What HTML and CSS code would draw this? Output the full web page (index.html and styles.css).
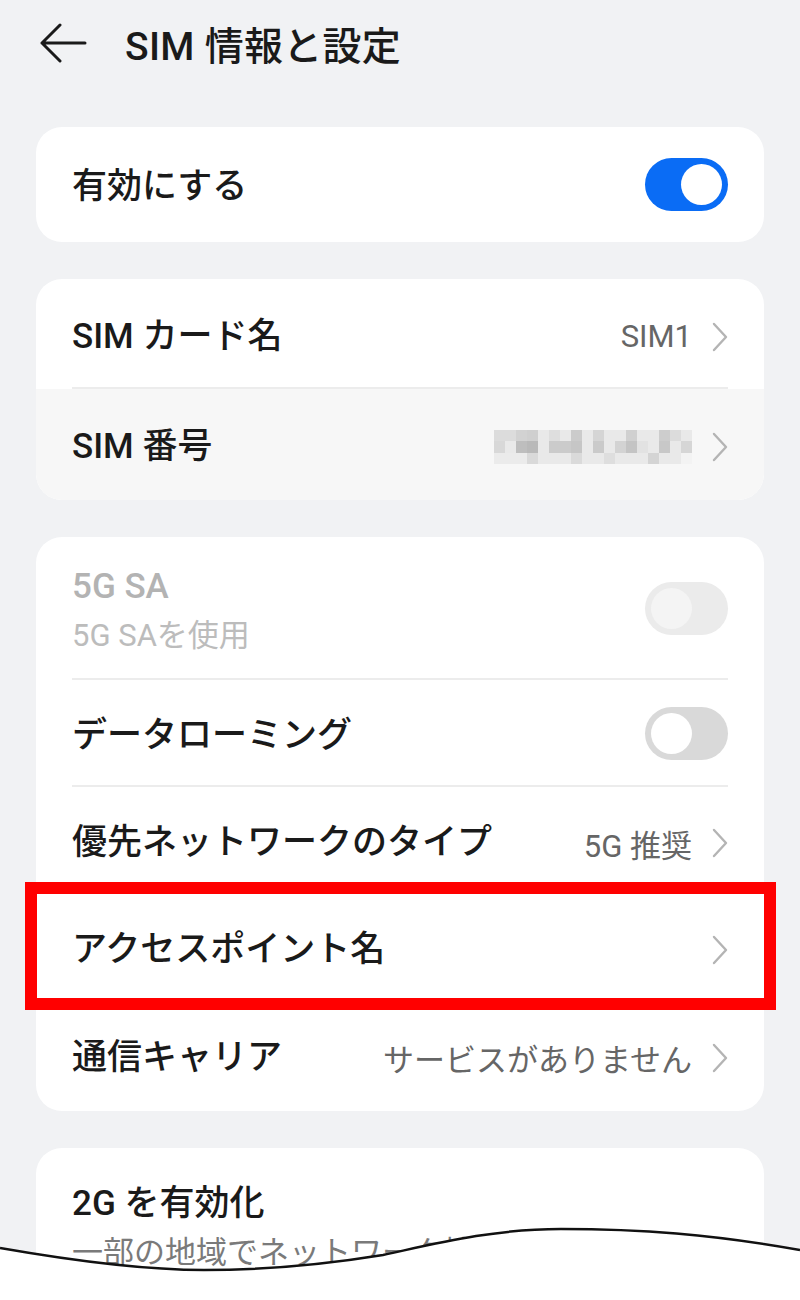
FILE: index.html
```html
<!DOCTYPE html>
<html lang="ja">
<head>
<meta charset="utf-8">
<title>SIM 情報と設定</title>
<link rel="stylesheet" href="styles.css">
</head>
<body>
<div class="screen">
  <header class="topbar">
    <svg class="back" width="48" height="40" viewBox="0 0 48 40"><path d="M3 20 H46 M21 2 L3 20 L21 38" fill="none" stroke="#1a1a1a" stroke-width="3" stroke-linecap="round" stroke-linejoin="round"/></svg>
    <h1 class="title">SIM 情報と設定</h1>
  </header>

  <section class="card">
    <div class="row row-single">
      <span class="label">有効にする</span>
      <span class="switch switch-on"><span class="knob"></span></span>
    </div>
  </section>

  <section class="card card-clip">
    <div class="row row-mid divided">
      <span class="label">SIM カード名</span>
      <span class="trail"><span class="value">SIM1</span><svg class="chev" width="16" height="30" viewBox="0 0 16 30"><path d="M2 2 L14 15 L2 28" fill="none" stroke="#b4b4b4" stroke-width="2.4" stroke-linecap="round" stroke-linejoin="round"/></svg></span>
    </div>
    <div class="row row-mid pressed">
      <span class="label">SIM 番号</span>
      <span class="trail">
        <svg class="mosaic" width="198" height="34" viewBox="0 0 198 34">
          <rect x="0" y="0" width="198" height="34" fill="#e9e9e9"/>
          <rect x="0" y="0" width="22" height="11" fill="#dcdcdc"/>
          <rect x="22" y="0" width="11" height="11" fill="#d2d2d2"/>
          <rect x="33" y="0" width="11" height="11" fill="#cfcfcf"/>
          <rect x="55" y="0" width="11" height="11" fill="#dedede"/>
          <rect x="77" y="0" width="11" height="11" fill="#cbcbcb"/>
          <rect x="99" y="0" width="11" height="11" fill="#d5d5d5"/>
          <rect x="132" y="0" width="11" height="11" fill="#d0d0d0"/>
          <rect x="165" y="0" width="11" height="11" fill="#cdcdcd"/>
          <rect x="176" y="0" width="11" height="11" fill="#dcdcdc"/>
          <rect x="0" y="11" width="11" height="12" fill="#d8d8d8"/>
          <rect x="22" y="11" width="11" height="12" fill="#bebebe"/>
          <rect x="33" y="11" width="11" height="12" fill="#b9b9b9"/>
          <rect x="55" y="11" width="22" height="12" fill="#cbcbcb"/>
          <rect x="77" y="11" width="11" height="12" fill="#c6c6c6"/>
          <rect x="99" y="11" width="11" height="12" fill="#cacaca"/>
          <rect x="121" y="11" width="11" height="12" fill="#d3d3d3"/>
          <rect x="132" y="11" width="11" height="12" fill="#c4c4c4"/>
          <rect x="143" y="11" width="11" height="12" fill="#e2e2e2"/>
          <rect x="165" y="11" width="11" height="12" fill="#c8c8c8"/>
          <rect x="187" y="11" width="11" height="12" fill="#d6d6d6"/>
          <rect x="0" y="23" width="33" height="11" fill="#ebebeb"/>
          <rect x="33" y="23" width="11" height="11" fill="#d9d9d9"/>
          <rect x="77" y="23" width="11" height="11" fill="#dadada"/>
          <rect x="110" y="23" width="11" height="11" fill="#dedede"/>
          <rect x="154" y="23" width="11" height="11" fill="#d4d4d4"/>
          <rect x="187" y="23" width="11" height="11" fill="#f3f3f3"/>
        </svg>
        <svg class="chev" width="16" height="30" viewBox="0 0 16 30"><path d="M2 2 L14 15 L2 28" fill="none" stroke="#b4b4b4" stroke-width="2.4" stroke-linecap="round" stroke-linejoin="round"/></svg>
      </span>
    </div>
  </section>

  <section class="card card-list">
    <div class="row row-double divided">
      <div class="texts">
        <span class="label disabled">5G SA</span>
        <span class="sub disabled-sub">5G SAを使用</span>
      </div>
      <span class="switch switch-disabled"><span class="knob"></span></span>
    </div>
    <div class="row divided">
      <span class="label">データローミング</span>
      <span class="switch switch-off"><span class="knob"></span></span>
    </div>
    <div class="row divided">
      <span class="label">優先ネットワークのタイプ</span>
      <span class="trail"><span class="value">5G 推奨</span><svg class="chev" width="16" height="30" viewBox="0 0 16 30"><path d="M2 2 L14 15 L2 28" fill="none" stroke="#b4b4b4" stroke-width="2.4" stroke-linecap="round" stroke-linejoin="round"/></svg></span>
    </div>
    <div class="row divided highlighted">
      <span class="label">アクセスポイント名</span>
      <span class="trail"><svg class="chev" width="16" height="30" viewBox="0 0 16 30"><path d="M2 2 L14 15 L2 28" fill="none" stroke="#b4b4b4" stroke-width="2.4" stroke-linecap="round" stroke-linejoin="round"/></svg></span>
      <span class="redbox"></span>
    </div>
    <div class="row row-last">
      <span class="label">通信キャリア</span>
      <span class="trail"><span class="value">サービスがありません</span><svg class="chev" width="16" height="30" viewBox="0 0 16 30"><path d="M2 2 L14 15 L2 28" fill="none" stroke="#b4b4b4" stroke-width="2.4" stroke-linecap="round" stroke-linejoin="round"/></svg></span>
    </div>
  </section>

  <section class="card card-bottom">
    <div class="texts bottom-texts">
      <span class="label">2G を有効化</span>
      <span class="sub">一部の地域でネットワーク情報</span>
    </div>
  </section>

  <svg class="wave" width="800" height="80" viewBox="0 0 800 80" preserveAspectRatio="none">
    <path d="M0 28 C80 42 150 50 204 50 C280 50 340 42 383 35 C430 25 490 9 561 9 C640 9 710 14 800 30 L800 80 L0 80 Z" fill="#ffffff"/>
    <path d="M0 28 C80 42 150 50 204 50 C280 50 340 42 383 35 C430 25 490 9 561 9 C640 9 710 14 800 30" fill="none" stroke="#111111" stroke-width="2.5"/>
  </svg>
</div>
</body>
</html>
```

FILE: styles.css
```css
* { box-sizing: border-box; }

html, body {
  margin: 0;
  padding: 0;
  background: #f1f2f4;
}

body {
  font-family: Roboto, "Noto Sans CJK JP", "Noto Sans", sans-serif;
  color: #1a1a1a;
}

.screen {
  position: relative;
  width: 800px;
  height: 1300px;
  overflow: hidden;
  padding: 0 36px;
  display: flex;
  flex-direction: column;
  gap: 37px;
}

.screen > * { flex: none; }

.topbar {
  height: 90px;
  display: flex;
  align-items: center;
  gap: 38px;
  padding-left: 3px;
  padding-bottom: 4px;
}

.back { flex: none; }

.title {
  margin: 0;
  font-size: 39px;
  font-weight: 500;
  letter-spacing: 0.3px;
  color: #1a1a1a;
}

.card {
  background: #ffffff;
  border-radius: 26px;
}

.card-clip { overflow: hidden; }

.card-list { padding-bottom: 2px; }

.row {
  position: relative;
  height: 107px;
  padding: 0 36px;
  display: flex;
  align-items: center;
  justify-content: space-between;
}

.row-single { height: 115px; }
.row-mid { height: 110px; }
.row-mid.pressed { height: 111px; background: #f7f7f7; }
.row-double { height: 143px; }
.row-last { height: 108px; }

.divided::after {
  content: "";
  position: absolute;
  left: 36px;
  right: 36px;
  bottom: 0;
  height: 2px;
  background: #ececec;
}

.label {
  font-size: 35px;
  font-weight: 500;
  line-height: 42px;
  color: #1a1a1a;
  white-space: nowrap;
}

.row > .label,
.row > .trail,
.row > .texts {
  padding-top: 5px;
}

.texts {
  display: flex;
  flex-direction: column;
  gap: 8px;
}

.sub {
  font-size: 31px;
  line-height: 40px;
  color: #7a7a7a;
  white-space: nowrap;
}

.disabled { color: #b3b3b3; }
.disabled-sub { color: #bcbcbc; }

.trail {
  display: flex;
  align-items: center;
  gap: 20px;
}

.value {
  font-size: 31px;
  color: #666666;
  white-space: nowrap;
}

.chev { display: block; flex: none; }
.mosaic { display: block; }

.switch {
  position: relative;
  width: 83px;
  height: 53px;
  border-radius: 27px;
  flex: none;
}

.switch .knob {
  position: absolute;
  top: 6px;
  width: 41px;
  height: 41px;
  border-radius: 50%;
  background: #ffffff;
}

.switch-on { background: #0a6cf5; }
.switch-on .knob { right: 6px; }

.switch-off { background: #d9d9d9; }
.switch-off .knob { left: 6px; }

.switch-disabled { background: #ebebeb; }
.switch-disabled .knob { left: 6px; background: #f4f4f4; }

.redbox {
  position: absolute;
  top: -12px;
  left: -11px;
  right: -12px;
  bottom: -9px;
  border: 12px solid #ff0000;
  pointer-events: none;
  z-index: 2;
}

.card-bottom {
  height: 200px;
  padding: 35px 36px 0;
}

.bottom-texts { gap: 8px; }

.wave {
  position: absolute;
  left: 0;
  top: 1220px;
  display: block;
  z-index: 3;
}
```
